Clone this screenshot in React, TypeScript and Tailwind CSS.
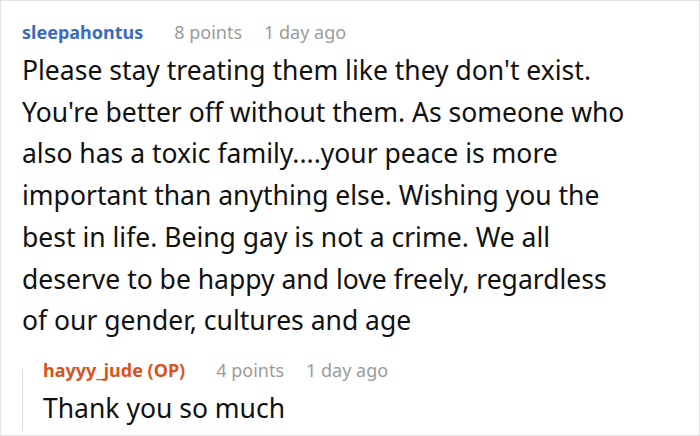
const bodyLines = [
    "Please stay treating them like they don't exist.",
    "You're better off without them. As someone who",
    "also has a toxic family....your peace is more",
    "important than anything else. Wishing you the",
    "best in life. Being gay is not a crime. We all",
    "deserve to be happy and love freely, regardless",
    "of our gender, cultures and age",
];

function Meta({name, points, color}: {name: string; points: string; color: string}) {
    return (
        <div className="flex items-center h-[26px] text-[18px] whitespace-nowrap">
            <span className={`font-bold ${color}`}>{name}</span>
            <span className="ml-[31px] text-[#9b9b9b]">{points}</span>
            <span className="ml-[22px] text-[#9b9b9b]">1 day ago</span>
        </div>
    );
}

export default function App() {
    return (
        <div
            className="w-[700px] h-[436px] bg-white border border-[#e2e2e2] overflow-hidden"
            style={{fontFamily: '"Noto Sans", "Open Sans", sans-serif'}}
        >
            <div className="pl-[21px] pr-4 pt-[18px]">
                {/* comment */}
                <Meta name="sleepahontus" points="8 points" color="text-[#3c6bbd]"/>
                <p className="mt-[5px] text-[26.5px] leading-[41.7px] text-[#111]">
                    {bodyLines.map((l) => (
                        <span key={l} className="block whitespace-nowrap">{l}</span>
                    ))}
                </p>

                {/* reply */}
                <div className="relative mt-[16px] pl-[21px]">
                    <div className="absolute left-0 top-[11px] bottom-[-4px] w-px bg-[#dcdcdc]"/>
                    <Meta name="hayyy_jude (OP)" points="4 points" color="text-[#d9541e]"/>
                    <p className="mt-[5px] text-[26.5px] leading-[38px] text-[#111]">Thank you so much</p>
                </div>
            </div>
        </div>
    );
}
